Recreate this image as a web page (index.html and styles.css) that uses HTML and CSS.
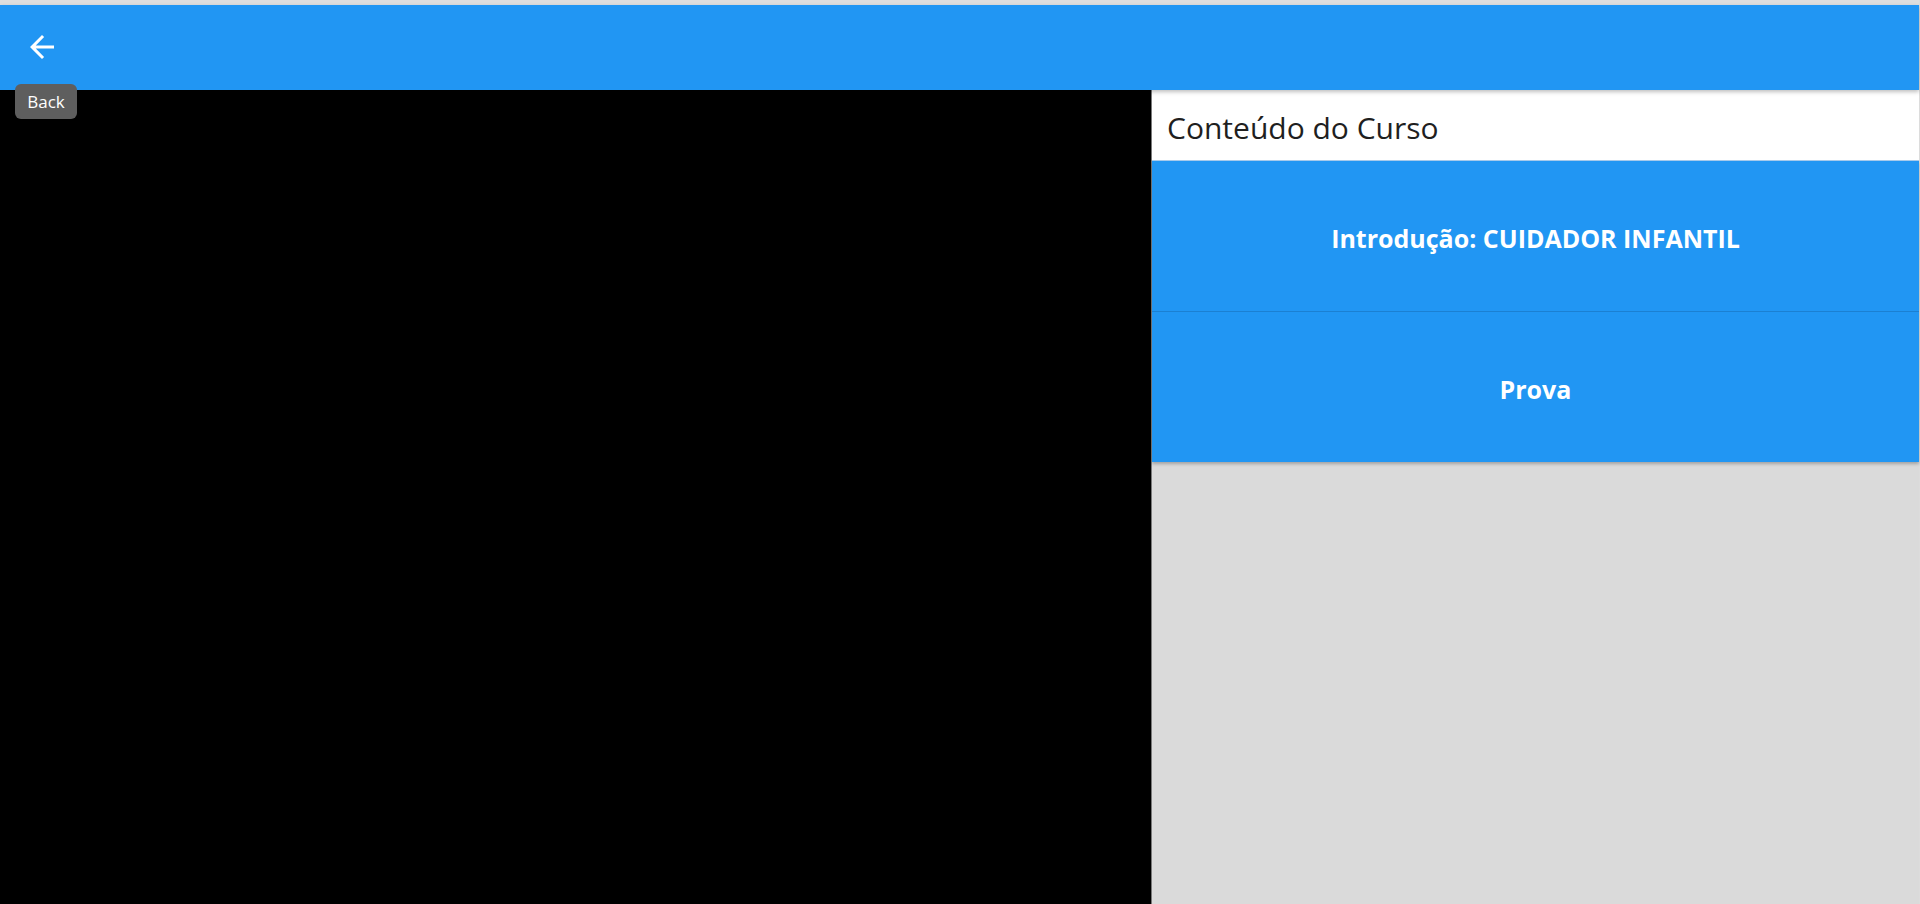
FILE: index.html
```html
<!DOCTYPE html>
<html lang="pt">
<head>
<meta charset="utf-8">
<title>Conteúdo do Curso</title>
<link rel="stylesheet" href="styles.css">
</head>
<body>
<div class="page">
  <div class="top-strip"></div>
  <header class="appbar">
    <button class="back-btn" aria-label="Back">
      <svg width="36" height="36" viewBox="0 0 24 24"><path fill="#fff" d="M20 11H7.83l5.59-5.59L12 4l-8 8 8 8 1.41-1.41L7.83 13H20v-2z"/></svg>
    </button>
    <div class="tooltip">Back</div>
  </header>
  <main class="main">
    <section class="video"></section>
    <aside class="panel">
      <div class="panel-header">Conteúdo do Curso</div>
      <div class="lessons">
        <div class="lesson lesson-first">Introdução: CUIDADOR INFANTIL</div>
        <div class="lesson">Prova</div>
      </div>
    </aside>
  </main>
</div>
</body>
</html>
```

FILE: styles.css
```css
html, body {
  margin: 0;
  padding: 0;
  height: 100%;
  overflow: hidden;
}
body {
  font-family: "Open Sans", "Noto Sans", "Liberation Sans", sans-serif;
  background: #ffffff;
}
.page {
  display: flex;
  flex-direction: column;
  height: 904px;
  border-right: 1px solid #dcdcdc;
}
.top-strip {
  height: 5px;
  background: #dedede;
  flex: 0 0 auto;
}
.appbar {
  position: relative;
  z-index: 2;
  height: 85px;
  flex: 0 0 auto;
  background: #2196f3;
  display: flex;
  align-items: center;
  padding-left: 24px;
  box-shadow: 0 2px 4px rgba(0, 0, 0, 0.25);
}
.back-btn {
  width: 36px;
  height: 36px;
  padding: 0;
  border: none;
  background: transparent;
  display: flex;
  margin-top: -1px;
}
.tooltip {
  position: absolute;
  left: 15px;
  top: 79px;
  width: 62px;
  height: 35px;
  box-sizing: border-box;
  background: #5e5e5e;
  color: #ffffff;
  border-radius: 6px;
  font-size: 17px;
  line-height: 35px;
  text-align: center;
  z-index: 3;
}
.main {
  flex: 1;
  display: flex;
  min-height: 0;
}
.video {
  flex: 0 0 1151px;
  background: #000000;
}
.panel {
  flex: 1;
  background: #dadada;
  border-left: 1px solid #7a7a7a;
  display: flex;
  flex-direction: column;
}
.panel-header {
  height: 71px;
  background: #ffffff;
  display: flex;
  align-items: center;
  padding-left: 15px;
  padding-top: 5px;
  box-sizing: border-box;
  font-size: 30px;
  color: #1f1f1f;
  border-bottom: 1px solid #a9cdee;
}
.lessons {
  display: flex;
  flex-direction: column;
  box-shadow: 0 2px 3px rgba(0, 0, 0, 0.25);
}
.lesson {
  height: 150px;
  background: #2196f3;
  color: #ffffff;
  font-weight: 700;
  font-size: 25px;
  padding-top: 3px;
  box-sizing: border-box;
  display: flex;
  align-items: center;
  justify-content: center;
}
.lesson-first {
  height: 151px;
  border-bottom: 1px solid #1b80d2;
}
```
